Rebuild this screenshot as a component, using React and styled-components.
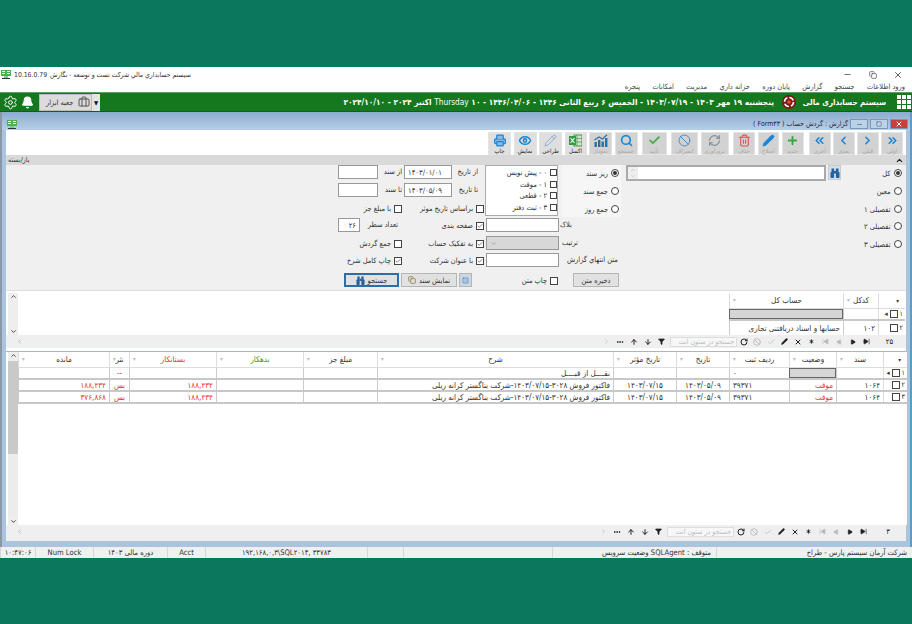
import React from "react";
import styled, { createGlobalStyle } from "styled-components";
import {
  Settings, Bell, Briefcase, Printer, Eye, Pencil, Search, Check, Ban, RefreshCw, Trash2, Plus,
  ChevronsRight, ChevronsLeft, ChevronRight, ChevronLeft, ChevronUp, ChevronDown, Minus, X, Copy,
  SkipForward, SkipBack, Play, Asterisk, RotateCw, ArrowUp, ArrowDown, Funnel, Ellipsis, Square,
} from "lucide-react";

const Global = createGlobalStyle`
  html, body { margin: 0; padding: 0; background: #0b775d; }
  body { font-family: "DejaVu Sans Condensed", "DejaVu Sans", "Noto Sans", sans-serif; font-size: 8px; color: #333; overflow: hidden; }
  * { box-sizing: border-box; }
`;

const Page = styled.div`display: flex; flex-direction: column; width: 912px; height: 624px;`;
const Band = styled.div`height: ${p => p.$h}px; background: #0b775d; flex: none;`;

const TitleBar = styled.div`height: 25px; background: #fff; display: flex; flex-direction: column; position: relative;`;
const TitleTop = styled.div`display: flex; align-items: center; height: 14px; padding: 1px 0 0 1px; justify-content: space-between;`;
const AppTitle = styled.div`display: flex; align-items: center; gap: 3px; font-size: 6.8px; color: #333;`;
const WinControls = styled.div`display: flex; align-items: center; gap: 16.5px; padding-right: 9px; color: #444;`;
const MenuRow = styled.div`direction: rtl; display: flex; gap: 12.4px; padding: 0 7px 0 0; font-size: 7.4px; color: #444; height: 11px; align-items: center;`;

const GreenBar = styled.div`height: 20px; background: #15781f; border-top: 1px solid #5f9f63; border-bottom: 1px solid #0f5f18; display: flex; align-items: center; justify-content: space-between; color: #fff;`;
const GreenLeft = styled.div`display: flex; align-items: center; padding-left: 3px; gap: 3px;`;
const ToolboxBtn = styled.div`direction: rtl; width: 53px; height: 17px; margin-left: 2px; background: #dcdcdc; border: 1px solid #bbb; color: #333; display: flex; align-items: center; justify-content: space-between; padding: 0 1px 0 6px; font-size: 7.4px;`;
const ToolboxArrow = styled.div`width: 8px; height: 17px; margin-left: -3px; background: #e4e4e4; color: #111; font-size: 6px; display: flex; align-items: center; justify-content: center;`;
const GreenRight = styled.div`direction: rtl; display: flex; align-items: center; padding-right: 1px;`;
const Brand = styled.div`font-size: 8px; font-weight: 700; margin: 0 11px 0 0; width: 90px; white-space: nowrap;`;
const DateLine = styled.div`font-size: 8.25px; font-weight: 700; margin-right: 8px; white-space: nowrap; width: 440px;`;
const Plain = styled.span`font-weight: 400;`;

const Win = styled.div`flex: none; height: 435px; background: #aac4de; border-left: 2px solid #8a97a5; border-right: 2px solid #5a9cc5; display: flex; flex-direction: column; padding: 0 0 6px;`;
const WinHead = styled.div`height: 18px; flex: none; background: linear-gradient(#8caccf, #b7cfe6); display: flex; align-items: flex-end; justify-content: space-between; padding: 0 2px 1px 5px;`;
const HeadRight = styled.div`direction: rtl; display: flex; align-items: center; gap: 2px; font-size: 7px; color: #223;`;
const CapBtn = styled.div`width: 18px; height: 10px; display: flex; align-items: center; justify-content: center; border: 1px solid #7d98b6; background: ${p => (p.$close ? "#c7403c" : "#bcd2e8")}; color: ${p => (p.$close ? "#fff" : "#456")};`;

const Inner = styled.div`flex: 1; margin: 0 4px 0 4px; background: #fff; display: flex; flex-direction: column; min-height: 0; border-bottom: 1px solid #5c6c7c;`;
const Toolbar = styled.div`direction: rtl; height: 25px; flex: none; display: flex; gap: 2.5px; padding: 2px 3px 0 0; background: #fff;`;
const ToolBtn = styled.div`width: ${p => p.$w}px; margin-right: ${p => p.$sep || 0}px; flex: none; height: 23px; background: ${p => (p.$on ? "#dfdfdf" : "#d2d2d2")}; border: 1px solid #e4e4e4; display: flex; flex-direction: column; align-items: center; justify-content: flex-start; padding-top: 1px; overflow: visible;`;
const ToolLabel = styled.span`font-size: 6px; line-height: 7px; white-space: nowrap; margin-top: 0; color: ${p => (p.$on ? "#222" : "#a9a9a9")};`;

const SectionBar = styled.div`height: 10px; flex: none; background: #d9d9d9; display: flex; align-items: center; justify-content: space-between; padding: 0 2px 0 2px; font-size: 7px; color: #333;`;

const Form = styled.div`direction: rtl; height: 126px; flex: none; background: #f0f0f0; border-bottom: 1px solid #ddd; display: grid; grid-template-columns: 63px 219px 65px 74px 81px 66px; grid-template-rows: 18px 18px 17px 18px 17px 20px 15px; justify-content: start; font-size: 7.4px; color: #333;`;
const Cell = styled.div`grid-column: ${p => p.$col}; grid-row: ${p => p.$row}; display: flex; align-items: flex-start; min-width: 0; white-space: nowrap;`;
const Opt = styled.label`display: flex; align-items: center; gap: 3px; height: 15px; padding-right: ${p => p.$pr || 0}px; white-space: nowrap;`;
const RadioOpt = styled(Opt)`height: 16px;`;
const RadioMark = styled.span`flex: none; width: 8px; height: 8px; border: 1px solid #444; border-radius: 50%; background: #fff; display: flex; align-items: center; justify-content: center;
  &::after { content: ""; width: 4px; height: 4px; border-radius: 50%; background: ${p => (p.$on ? "#333" : "transparent")}; }`;
const CheckMark = styled.span`flex: none; width: ${p => p.$s || 8}px; height: ${p => p.$s || 8}px; border: 1px solid #444; background: #fff; color: #333; display: flex; align-items: center; justify-content: center;`;
const Input = styled.div`flex: none; width: ${p => p.$w}px; height: 14px; background: ${p => p.$dis ? "#d8d8d8" : "#fff"}; border: 1px solid #999; display: flex; align-items: center; justify-content: ${p => p.$end ? "flex-end" : "flex-start"}; padding: 0 3px; font-size: 7.6px;`;
const Lbl = styled.span`flex: 1; padding-left: ${p => p.$pl || 0}px; padding-right: ${p => p.$pr || 0}px; text-align: ${p => p.$left ? "left" : "right"}; line-height: 14px;`;
const SumPanel = styled.div`grid-column: 3; grid-row: 1 / span 3; margin: 0 3px; padding-right: 2px; background: #f6f6f6; display: flex; flex-direction: column; gap: 2px; height: 52px;`;
const SumOpt = styled(Opt)`height: 16px; justify-content: flex-start;`;
const StatusList = styled.div`grid-column: 4; grid-row: 1 / span 3; margin: 0 1px 0 0; width: 73px; height: 51px; background: #fff; border: 1px solid #aaa; display: flex; flex-direction: column; padding: 1px 0 0 0;`;
const ListOpt = styled(Opt)`height: 11.5px; gap: 3px;`;
const SearchBox = styled.div`display: flex; gap: 2px; padding-right: 2px;`;
const Binoc = styled.div`width: 13px; height: 15px; background: #d4dce6; border: 1px solid #c4ccd6; display: flex; align-items: center; justify-content: center;`;
const SearchField = styled.div`width: 200px; height: 16px; background: #fff; border: 2px solid #aaa; display: flex; justify-content: flex-end; align-items: stretch; padding: 0 1px 0 0;`;
const Spin = styled.div`width: 10px; background: #eee; color: #aaa; display: flex; flex-direction: column; align-items: center; justify-content: center;`;
const FlatBtn = styled.div`width: ${p => p.$w}px; height: 14px; background: ${p => p.$tint ? "#c9d6e4" : "#e1e1e1"}; border: ${p => p.$focus ? "2px solid #2b6ea8" : "1px solid #b5b5b5"}; display: flex; align-items: center; justify-content: center; gap: 3px; font-size: 7.4px; color: #333; white-space: nowrap; margin-right: ${p => p.$mr || 0}px;`;
const ActionRow = styled(Cell)`gap: 2px; padding-right: 13px; width: 147px;`;

const GridArea = styled.div`display: flex; flex: none; height: ${p => p.$h}px; min-height: 0; background: #fff;`;
const VScroll = styled.div`width: 10px; margin-left: 2px; flex: none; background: #eee; display: flex; flex-direction: column; justify-content: space-between; align-items: center; color: #333; position: relative;`;
const Thumb = styled.div`flex: 1; width: 100%; margin: 2px 0; background: linear-gradient(#c9c9c9 0 60%, #ececec 60%);`;
const Spacer = styled.div`flex: 1; min-width: 0; background: #fff;`;
const Table = styled.div`direction: rtl; flex: ${p => p.$fill ? 1 : "none"}; width: ${p => p.$w ? p.$w + "px" : "auto"}; margin-right: ${p => p.$mr || 0}px; font-size: 8px; background: #fff; position: relative;`;
const Row = styled.div`display: grid; grid-template-columns: ${p => p.$cols}; height: ${p => p.$h}px; border-bottom: ${p => p.$heavy ? "2px solid #c8c8c8" : "none"};`;
const Head = styled.div`border-left: 1px solid #ddd; border-bottom: 1px solid #ddd; display: flex; align-items: center; justify-content: center; position: relative; color: ${p => p.$c || "#333"}; font-size: 8px; white-space: nowrap; overflow: hidden;
  &::after { content: "${p => (p.$caret === false ? "" : "▾")}"; position: absolute; left: 3px; top: 3px; color: #bbb; font-size: 6px; }`;
const Td = styled.div`border-left: 1px solid #ccc; display: flex; align-items: center; padding: 0 3px; white-space: nowrap; overflow: hidden; justify-content: ${p => p.$a === "c" ? "center" : p.$a === "l" ? "flex-end" : "flex-start"}; color: ${p => p.$c || "#333"}; background: ${p => p.$active ? "#d6d6d6" : "transparent"}; outline: ${p => p.$active ? "1px solid #666" : "none"}; outline-offset: -1px;`;
const RowHead = styled.div`direction: rtl; border-left: 1px solid #ddd; display: flex; align-items: center; gap: 2px; padding-right: 2px; font-size: 7px;`;
const HeadCorner = styled(Head)`justify-content: flex-start; padding-right: 6px; color: #333; font-size: 6px; &::after { content: ""; }`;

const Pager = styled.div`direction: rtl; height: 13px; flex: none; background: #efefef; display: flex; align-items: center; color: #222;`;
const PagerCount = styled.div`width: ${p => p.$w}px; flex: none; text-align: center; font-size: 7.6px;`;
const Tool = styled.div`width: 13.6px; flex: none; display: flex; align-items: center; justify-content: center; color: ${p => p.$dim ? "#bcbcbc" : "#222"};`;
const PagerSearch = styled.div`width: 67px; height: 10px; flex: none; margin-left: 2px; background: #f7f7f7; border: 1px solid #ddd; color: #bbb; font-size: 7px; display: flex; align-items: center; padding-right: 2px; overflow: hidden; white-space: nowrap;`;
const PagerTail = styled.div`flex: 1; padding-left: 10px; color: #aaa; display: flex; justify-content: flex-end;`;
const LineGap = styled.div`height: ${p => p.$h}px; flex: none; background: ${p => p.$bg || "#fff"}; border-bottom: ${p => p.$line ? "1.5px solid #a9b6c2" : "none"};`;

const Status = styled.div`height: 11px; flex: none; direction: rtl; background: #f0f0f0; display: grid; grid-template-columns: 196px 164px 149px 36px 162px 38px 74px 58px 35px; font-size: 7.6px; color: #333;`;
const StatusCell = styled.div`direction: ${p => p.$ltr ? "ltr" : "rtl"}; border-left: 1px solid #d6d6d6; display: flex; align-items: center; justify-content: ${p => p.$start ? "flex-start" : "center"}; padding-right: ${p => p.$start ? "5px" : 0}; white-space: nowrap; overflow: hidden;`;

const AppIcon = ({ size = 10 }) => (
  <svg width={size} height={size * 0.9} viewBox="0 0 10 9">
    <rect x="0" y="0" width="10" height="6" fill="#4caf50" />
    <path d="M1 1.5h3M6 1.5h3M1 3.5h3M6 3.5h3" stroke="#fff" strokeWidth="1" />
    <rect x="3" y="6" width="4" height="2" fill="#7c9" />
    <rect x="1" y="8" width="8" height="1" fill="#333" />
  </svg>
);
const DotsGrid = () => (
  <svg width="14" height="14" viewBox="0 0 14 14" fill="#fff">
    {[0, 5, 10].flatMap(y => [0, 5, 10].map(x => <rect key={x + "-" + y} x={x} y={y} width="4" height="4" />))}
  </svg>
);
const Logo = () => (
  <svg width="14" height="14" viewBox="0 0 14 14">
    <circle cx="7" cy="7" r="7" fill="#7d1712" />
    <circle cx="7" cy="7" r="4.5" fill="none" stroke="#fff" strokeWidth="1.6" strokeDasharray="5 2" />
    <circle cx="7" cy="7" r="1.8" fill="#e8502a" />
  </svg>
);
const Binoculars = ({ size = 10 }) => (
  <svg width={size} height={size} viewBox="0 0 10 10" fill="#27619c">
    <rect x="0.5" y="4" width="3.6" height="6" rx="0.8" /><rect x="5.9" y="4" width="3.6" height="6" rx="0.8" />
    <rect x="1.5" y="0.5" width="2.6" height="4" /><rect x="5.9" y="0.5" width="2.6" height="4" /><rect x="4" y="3" width="2" height="2.5" />
  </svg>
);
const Excel = () => (
  <svg width="13" height="13" viewBox="0 0 13 13">
    <rect x="5" y="1" width="8" height="11" fill="#cfe8d0" stroke="#3f9a48" />
    <path d="M8 1v11M5 4.5h8M5 8h8" stroke="#3f9a48" strokeWidth=".7" />
    <rect x="0" y="2" width="7" height="9" fill="#2f9a3e" />
    <path d="M1.5 4l4 5M5.5 4l-4 5" stroke="#fff" strokeWidth="1.1" />
  </svg>
);
const Chart = () => (
  <svg width="14" height="13" viewBox="0 0 14 13" fill="#2f6f9f">
    <rect x="0.5" y="8" width="2.4" height="5" /><rect x="4" y="6" width="2.4" height="7" /><rect x="7.5" y="7.5" width="2.4" height="5.5" /><rect x="11" y="4" width="2.4" height="9" />
    <path d="M0.5 6L5 3l3.5 2L13 0.8" fill="none" stroke="#2f6f9f" strokeWidth="1.2" />
  </svg>
);

const blue = "#1b86d6";
const tools = [
  { t: "اولی", w: 22, i: <ChevronsRight size={15} color={blue} strokeWidth={3} /> },
  { t: "قبلی", w: 21.5, i: <ChevronRight size={15} color={blue} strokeWidth={3} /> },
  { t: "بعدی", w: 21.5, i: <ChevronLeft size={15} color={blue} strokeWidth={3} /> },
  { t: "آخری", w: 21.5, i: <ChevronsLeft size={15} color={blue} strokeWidth={3} /> },
  { t: "جدید", w: 22, sep: 3, i: <Plus size={15} color="#3fa34a" strokeWidth={3.4} /> },
  { t: "اصلاح", w: 21.5, i: <Pencil size={13} color={blue} fill={blue} strokeWidth={1.5} /> },
  { t: "حذف", w: 22, i: <Trash2 size={13} color="#d9534f" strokeWidth={2} /> },
  { t: "بروزآوری", w: 28, sep: 2, i: <RefreshCw size={13} color="#7f8c99" strokeWidth={2} /> },
  { t: "انصراف", w: 27, i: <Ban size={13} color="#4f86b8" strokeWidth={1.8} /> },
  { t: "تأیید", w: 25, sep: 2, i: <Check size={15} color="#4caf50" strokeWidth={3.4} /> },
  { t: "جستجو", w: 23, sep: 1.5, i: <Search size={13} color={blue} strokeWidth={3} /> },
  { t: "نمودار", w: 23, i: <Chart /> },
  { t: "اکسل", w: 22, on: true, i: <Excel /> },
  { t: "طراحی", w: 23, on: true, i: <Pencil size={13} color="#7ea4cf" strokeWidth={1.6} /> },
  { t: "نمایش", w: 23, on: true, i: <Eye size={14} color={blue} strokeWidth={2.8} /> },
  { t: "چاپ", w: 23, on: true, i: <Printer size={14} color={blue} fill="#7dbdf0" strokeWidth={2.2} /> },
];

const Radio = ({ on, children, pr }) => (
  <RadioOpt $pr={pr}><RadioMark $on={on} /><span>{children}</span></RadioOpt>
);
const Tick = ({ on, s }) => (
  <CheckMark $s={s}>{on && <Check size={6} strokeWidth={2.5} />}</CheckMark>
);
const CheckOpt = ({ on, children, pr, s, as: As = Opt }) => (
  <As $pr={pr}><Tick on={on} s={s} /><span>{children}</span></As>
);

const PagerBar = ({ count, w }) => (
  <Pager>
    <PagerCount $w={w}>{count}</PagerCount>
    <Tool><SkipForward size={7} fill="#222" strokeWidth={2} /></Tool>
    <Tool><Play size={6} fill="#222" strokeWidth={2} /></Tool>
    <Tool $dim><Play size={6} fill="#bcbcbc" strokeWidth={2} style={{ transform: "scaleX(-1)" }} /></Tool>
    <Tool $dim><SkipBack size={7} fill="#bcbcbc" strokeWidth={2} /></Tool>
    <Tool><Asterisk size={7} strokeWidth={3} /></Tool>
    <Tool><X size={8} strokeWidth={3} /></Tool>
    <Tool><Pencil size={7} fill="#222" strokeWidth={2} /></Tool>
    <Tool $dim><Check size={8} strokeWidth={2.4} /></Tool>
    <Tool $dim><Ban size={8} strokeWidth={2.6} /></Tool>
    <Tool><RotateCw size={8} strokeWidth={3} /></Tool>
    <PagerSearch>جستجو در ستون انت</PagerSearch>
    <Tool><Funnel size={7} fill="#222" strokeWidth={2} /></Tool>
    <Tool><ArrowDown size={8} strokeWidth={3} /></Tool>
    <Tool><ArrowUp size={8} strokeWidth={3} /></Tool>
    <Tool><Ellipsis size={8} strokeWidth={3} /></Tool>
    <Tool $dim><ChevronRight size={7} strokeWidth={2.5} /></Tool>
    <PagerTail><ChevronLeft size={7} strokeWidth={2.5} /></PagerTail>
  </Pager>
);

const mainCols = "24px 47px 47px 60px 53px 63px 236px 74px 87px 87px 20px 91px";
const accCols = "27px 35px 114px";
const rowsData = [["۲", "موقت"], ["۳", "موقت"]];
const desc = "فاکتور فروش ۳۰۲۸-۱۴۰۳/۰۷/۱۵-شرکت بناگستر کرانه ریلی";

export default function App() {
  return (
    <Page>
      <Global />
      <Band $h={67} />
      <TitleBar>
        <TitleTop>
          <AppTitle><AppIcon /><span>10.16.0.79</span><span dir="rtl">سیستم حسابداري مالي شرکت تست و توسعه - نگارش</span></AppTitle>
          <WinControls><Minus size={9} /><Copy size={8} /><X size={10} /></WinControls>
        </TitleTop>
        <MenuRow>
          {["ورود اطلاعات", "جستجو", "گزارش", "پایان دوره", "خزانه داري", "مدیریت", "امکانات", "پنجره"].map(m => <span key={m}>{m}</span>)}
        </MenuRow>
      </TitleBar>
      <GreenBar>
        <GreenLeft>
          <Settings size={15} color="#fff" strokeWidth={1.6} />
          <Bell size={13} color="#fff" fill="#fff" />
          <ToolboxBtn><Briefcase size={12} color="#555" /><span>جعبه ابزار</span></ToolboxBtn>
          <ToolboxArrow>▼</ToolboxArrow>
        </GreenLeft>
        <GreenRight>
          <DotsGrid />
          <Brand>سیستم حسابداری مالی</Brand>
          <Logo />
          <DateLine>پنجشنبه ۱۹ مهر ۱۴۰۳ - ۱۴۰۳/۰۷/۱۹ - الخمیس ۶ ربیع الثانی ۱۴۴۶ - ۱۴۴۶/۰۴/۰۶ - ۱۰ <Plain>Thursday</Plain> اکتبر ۲۰۲۴ - ۲۰۲۴/۱۰/۱۰</DateLine>
        </GreenRight>
      </GreenBar>
      <Win>
        <WinHead>
          <AppIcon />
          <HeadRight>
            <CapBtn $close><X size={8} strokeWidth={3} /></CapBtn>
            <CapBtn><Square size={6} /></CapBtn>
            <CapBtn><Minus size={7} /></CapBtn>
            <span>گزارش : گردش حساب ( Form۳۳ )</span>
          </HeadRight>
        </WinHead>
        <Inner>
          <Toolbar>
            {tools.map(({ t, w, sep, i, on }) => (
              <ToolBtn key={t} $on={on} $w={w} $sep={sep}>{i}<ToolLabel $on={on}>{t}</ToolLabel></ToolBtn>
            ))}
          </Toolbar>
          <SectionBar><span>باز/بسته</span><ChevronUp size={9} color="#222" strokeWidth={3} /></SectionBar>
          <Form>
            <Cell $col={1} $row={1}><Radio on pr={4.5}>کل</Radio></Cell>
            <Cell $col={1} $row={2}><Radio pr={4.5}>معین</Radio></Cell>
            <Cell $col={1} $row={3}><Radio pr={4.5}>تفصیلی ۱</Radio></Cell>
            <Cell $col={1} $row={4}><Radio pr={4.5}>تفصیلی ۲</Radio></Cell>
            <Cell $col={1} $row={5}><Radio pr={4.5}>تفصیلی ۳</Radio></Cell>
            <Cell $col={2} $row={1}>
              <SearchBox>
                <Binoc><Binoculars /></Binoc>
                <SearchField><Spin><ChevronUp size={6} /><ChevronDown size={6} /></Spin></SearchField>
              </SearchBox>
            </Cell>
            <SumPanel>
              <SumOpt><RadioMark $on /><span>ریز سند</span></SumOpt>
              <SumOpt><RadioMark /><span>جمع سند</span></SumOpt>
              <SumOpt><RadioMark /><span>جمع روز</span></SumOpt>
            </SumPanel>
            <StatusList>
              <CheckOpt as={ListOpt} s={7}>۰ - پیش نویس</CheckOpt>
              <CheckOpt as={ListOpt} s={7}>۱ - موقت</CheckOpt>
              <CheckOpt as={ListOpt} s={7}>۲ - قطعی</CheckOpt>
              <CheckOpt as={ListOpt} s={7}>۳ - ثبت دفتر</CheckOpt>
            </StatusList>
            <Cell $col={5} $row={1}><Lbl $pr={7}>از تاریخ</Lbl><Input $w={48} $end>۱۴۰۳/۰۱/۰۱</Input></Cell>
            <Cell $col={5} $row={2}><Lbl $pr={7}>تا تاریخ</Lbl><Input $w={48} $end>۱۴۰۳/۰۵/۰۹</Input></Cell>
            <Cell $col={5} $row={3}><CheckOpt pr={1}>براساس تاریخ موثر</CheckOpt></Cell>
            <Cell $col={5} $row={4}><CheckOpt on pr={1}>صفحه بندی</CheckOpt></Cell>
            <Cell $col={5} $row={5}><CheckOpt on pr={1}>به تفکیک حساب</CheckOpt></Cell>
            <Cell $col={5} $row={6}><CheckOpt on pr={1}>با عنوان شرکت</CheckOpt></Cell>
            <Cell $col={6} $row={1}><Lbl $pr={2}>از سند</Lbl><Input $w={40} /></Cell>
            <Cell $col={6} $row={2}><Lbl $pr={2}>تا سند</Lbl><Input $w={40} /></Cell>
            <Cell $col={6} $row={3}><CheckOpt pr={2}>با مبلغ جز</CheckOpt></Cell>
            <Cell $col={6} $row={4}><Lbl $pr={6}>تعداد سطر</Lbl><Input $w={22}>۲۶</Input></Cell>
            <Cell $col={6} $row={5}><CheckOpt pr={2}>جمع گردش</CheckOpt></Cell>
            <Cell $col={6} $row={6}><CheckOpt on pr={2}>چاپ کامل شرح</CheckOpt></Cell>
            <Cell $col={3} $row={4}><Lbl $left $pl={1}>بلاک</Lbl></Cell>
            <Cell $col={3} $row={5}><Lbl $left $pl={3}>ترتیب</Lbl></Cell>
            <Cell $col={3} $row={6}><Lbl $left $pl={8}>متن انتهاي گزارش</Lbl></Cell>
            <Cell $col={4} $row={4}><Input $w={73} /></Cell>
            <Cell $col={4} $row={5}><Input $w={73} $dis $end><ChevronDown size={7} color="#888" /></Input></Cell>
            <Cell $col={4} $row={6}><Input $w={73} /></Cell>
            <Cell $col={3} $row={7}><FlatBtn $w={46} $mr={5}>ذخیره متن</FlatBtn></Cell>
            <Cell $col={4} $row={7}><CheckOpt pr={1}>چاپ متن</CheckOpt></Cell>
            <ActionRow $col="5 / span 2" $row={7}>
              <FlatBtn $w={13} $tint><Square size={7} color="#5b86b5" fill="#a9c4e0" /></FlatBtn>
              <FlatBtn $w={56}><span>نمایش سند</span><Copy size={8} color="#7a6a20" /></FlatBtn>
              <FlatBtn $w={55} $focus><span>جستجو</span><Binoculars size={9} /></FlatBtn>
            </ActionRow>
          </Form>
          <LineGap $h={2} />
          <GridArea $h={42}>
            <VScroll><ChevronUp size={7} strokeWidth={3} /><ChevronDown size={7} strokeWidth={3} /></VScroll>
            <Spacer />
            <Table $w={176} $mr={1}>
              <Row $cols={accCols} $h={16}>
                <HeadCorner $caret={false}>▾</HeadCorner>
                <Head>کدکل</Head>
                <Head>حساب کل</Head>
              </Row>
              <Row $cols={accCols} $h={12} $heavy>
                <RowHead><span>۱</span><Tick /><span>◂</span></RowHead>
                <Td />
                <Td $active />
              </Row>
              <Row $cols={accCols} $h={14}>
                <RowHead><span>۲</span><Tick /></RowHead>
                <Td>۱۰۲</Td>
                <Td>حسابها و اسناد دریافتنی تجاری</Td>
              </Row>
            </Table>
          </GridArea>
          <PagerBar count="۲۵" w={33} />
          <LineGap $h={4} $line />
          <GridArea $h={173}>
            <VScroll><ChevronUp size={7} strokeWidth={3} /><Thumb /><ChevronDown size={7} strokeWidth={3} /></VScroll>
            <Table $fill>
              <Row $cols={mainCols} $h={16}>
                <HeadCorner $caret={false}>▾</HeadCorner>
                <Head>سند</Head>
                <Head>وضعیت</Head>
                <Head>ردیف ثبت</Head>
                <Head>تاریخ</Head>
                <Head>تاریخ مؤثر</Head>
                <Head>شرح</Head>
                <Head>مبلغ جز</Head>
                <Head $c="#3a9a3a">بدهکار</Head>
                <Head $c="#e33">بستانکار</Head>
                <Head>نثر</Head>
                <Head>مانده</Head>
              </Row>
              <Row $cols={mainCols} $h={12} $heavy>
                <RowHead><span>۱</span><Tick /><span>◂</span></RowHead>
                <Td /><Td $active /><Td $a="l">۰</Td><Td /><Td />
                <Td>نقــــل از قبــــل</Td>
                <Td /><Td /><Td /><Td $a="c" $c="#e33">--</Td><Td />
              </Row>
              {rowsData.map(([n, s], i) => (
                <Row key={n} $cols={mainCols} $h={12} $heavy>
                  <RowHead><span>{n}</span><Tick /></RowHead>
                  <Td>۱۰۶۴</Td>
                  <Td $c="#e33">{s}</Td>
                  <Td $a="l">۳۹۳۷۱</Td>
                  <Td $a="c">۱۴۰۳/۰۵/۰۹</Td>
                  <Td $a="c">۱۴۰۳/۰۷/۱۵</Td>
                  <Td>{desc}</Td>
                  <Td />
                  <Td />
                  <Td $c="#e33">۱۸۸,۴۳۴</Td>
                  <Td $a="c" $c="#e33">بس</Td>
                  <Td $c="#e33">{i === 0 ? "۱۸۸,۴۳۴" : "۳۷۶,۸۶۸"}</Td>
                </Row>
              ))}
            </Table>
          </GridArea>
          <PagerBar count="۳" w={36} />
          <LineGap $h={3} $bg="#efefef" />
        </Inner>
      </Win>
      <Status>
        <StatusCell $start>شرکت آرمان سیستم پارس - طراح</StatusCell>
        <StatusCell $start>متوقف : SQLAgent وضعیت سرویس</StatusCell>
        <StatusCell />
        <StatusCell />
        <StatusCell $ltr>۱۹۲,۱۶۸,۰,۳\SQL۲۰۱۴, ۳۳۷۸۳</StatusCell>
        <StatusCell>Acct</StatusCell>
        <StatusCell>دوره مالی ۱۴۰۳</StatusCell>
        <StatusCell>Num Lock</StatusCell>
        <StatusCell>۱۰:۴۷:۰۶</StatusCell>
      </Status>
      <Band $h={66} />
    </Page>
  );
}
